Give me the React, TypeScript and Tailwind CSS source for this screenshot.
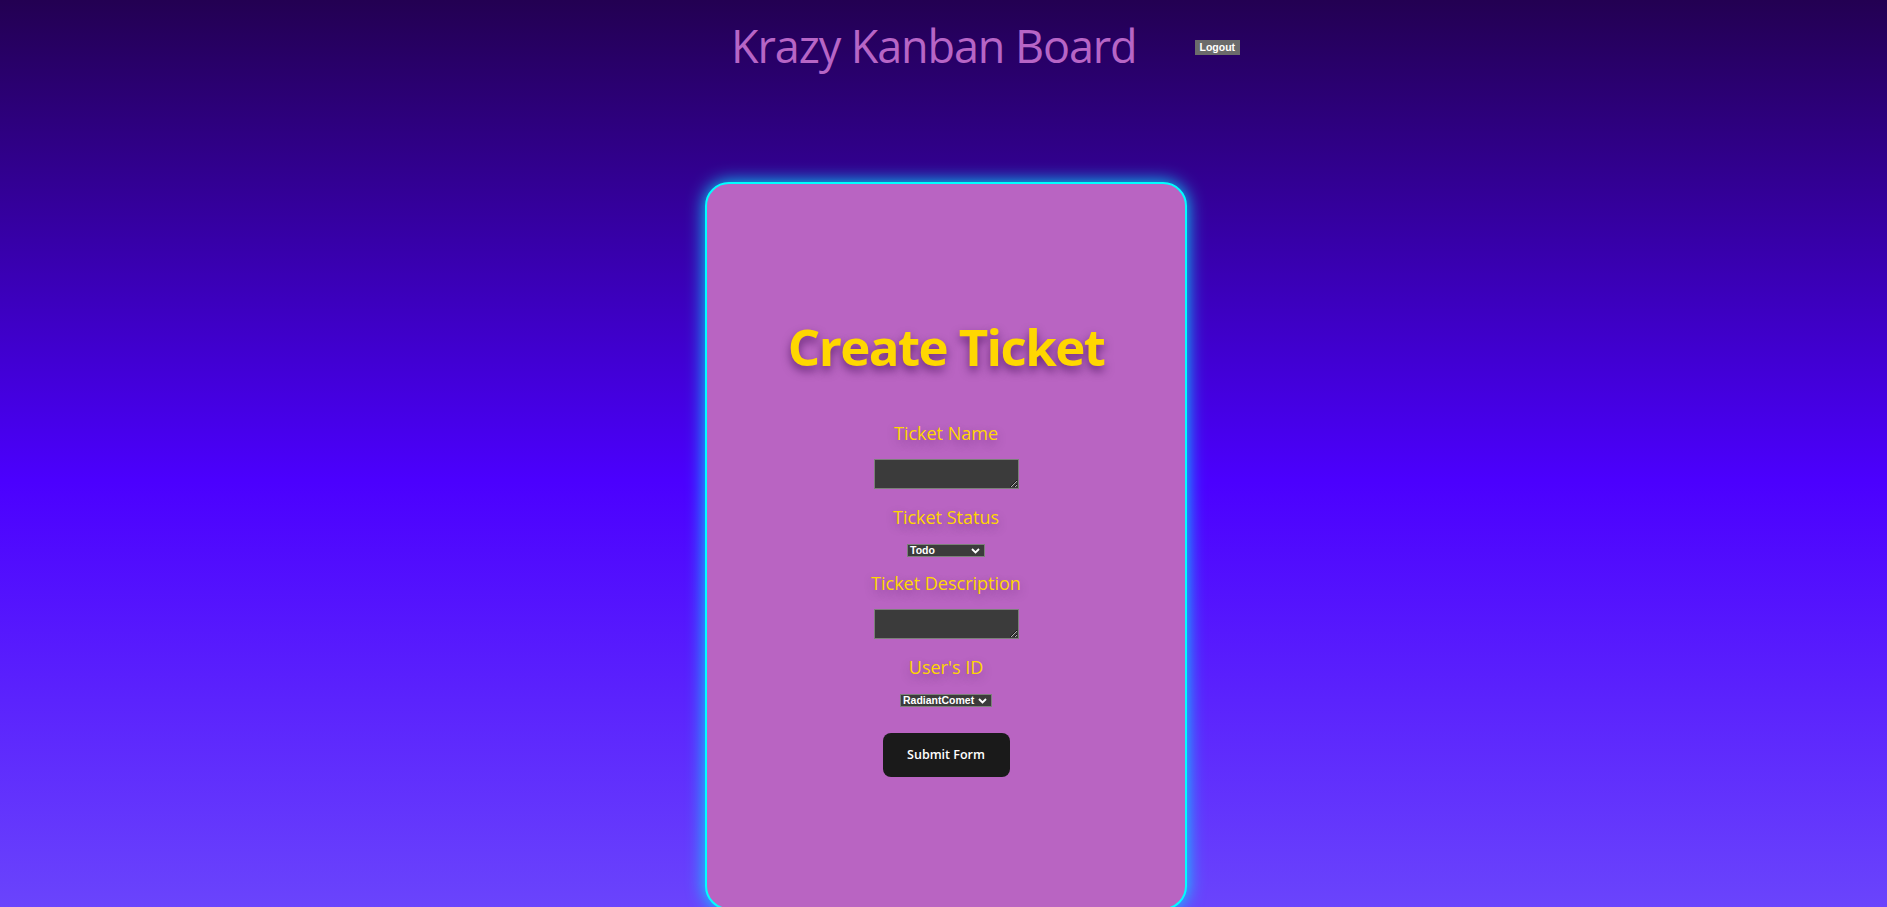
import React from "react";

function Chevron() {
  return (
    <svg width="9" height="6" viewBox="0 0 9 6" className="shrink-0">
      <path d="M1 1 L4.5 4.5 L8 1" fill="none" stroke="#ffffff" strokeWidth="1.8" />
    </svg>
  );
}

function FakeSelect({ value, width }: { value: string; width: string }) {
  return (
    <div
      className={`${width} h-[13px] bg-[#3b3b3b] border border-[#7b8079] flex items-center justify-between pl-[2px] pr-[4px] text-white text-[10.5px] leading-[11px] font-bold font-['Liberation_Sans',Arial,sans-serif]`}
    >
      <span>{value}</span>
      <Chevron />
    </div>
  );
}

export default function App() {
  const labelCls =
    "text-[#ffd700] text-[18px] leading-[22px] font-['Open_Sans',sans-serif] [text-shadow:0_4px_10px_rgba(60,0,80,0.35)]";
  return (
    <div className="h-[907px] overflow-hidden bg-[linear-gradient(180deg,#230052_0%,#4b00fe_53%,#6a44fc_100%)] font-['Open_Sans',sans-serif]">
      <header className="h-[94px] flex items-center pl-[731px]">
        <h1 className="-mt-[2px] text-[45px] leading-[48px] tracking-[-1.1px] font-medium text-[#b765c6] font-['Open_Sans',sans-serif]">
          Krazy Kanban Board
        </h1>
        <button className="ml-[58px] h-[15px] px-[5px] bg-[#6b6b6b] text-white text-[10.5px] leading-[13px] font-bold font-['Liberation_Sans',Arial,sans-serif]">
          Logout
        </button>
      </header>
      <main className="mt-[88px] flex justify-center pl-[5px]">
        <div className="w-[482px] h-[728px] shrink-0 rounded-[24px] border-2 border-[#00ffff] bg-[#b964c2] shadow-[0_0_18px_#00e5ff] flex flex-col items-center pt-[134px]">
          <h2 className="text-[51px] leading-[56px] font-bold tracking-[-1.6px] text-[#ffd700] [text-shadow:0_5px_10px_rgba(50,0,70,0.6)]">
            Create Ticket
          </h2>
          <label className={`${labelCls} mt-[48px]`}>Ticket Name</label>
          <textarea className="mt-[15px] w-[145px] h-[30px] bg-[#3b3b3b] border border-[#7b8079] block" />
          <label className={`${labelCls} mt-[17px]`}>Ticket Status</label>
          <div className="mt-[16px]">
            <FakeSelect value="Todo" width="w-[78px]" />
          </div>
          <label className={`${labelCls} mt-[15px]`}>Ticket Description</label>
          <textarea className="mt-[15px] w-[145px] h-[30px] bg-[#3b3b3b] border border-[#7b8079] block" />
          <label className={`${labelCls} mt-[17px]`}>User&apos;s ID</label>
          <div className="mt-[16px]">
            <FakeSelect value="RadiantComet" width="w-[92px]" />
          </div>
          <button className="mt-[26px] w-[127px] h-[44px] rounded-[8px] bg-[#1a1a1a] text-white text-[12.5px] font-semibold">
            Submit Form
          </button>
        </div>
      </main>
    </div>
  );
}
